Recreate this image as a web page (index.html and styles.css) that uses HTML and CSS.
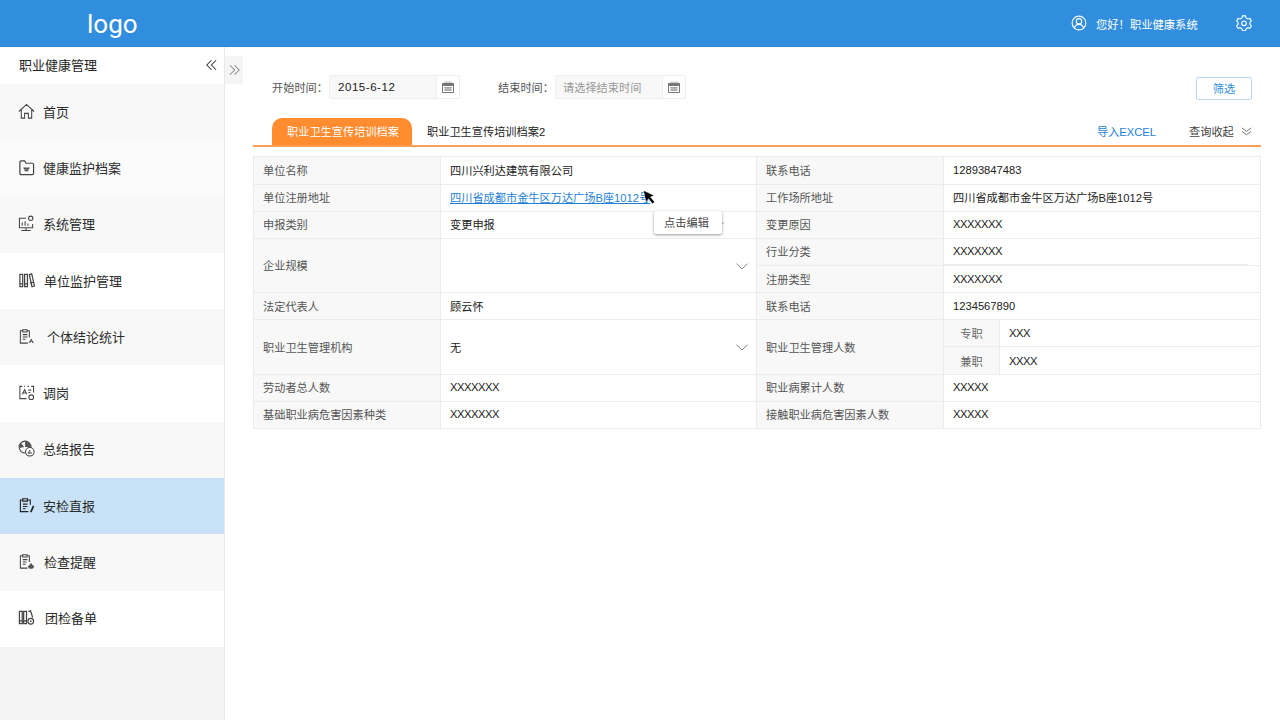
FILE: index.html
```html
<!DOCTYPE html>
<html lang="zh">
<head>
<meta charset="utf-8">
<title>职业健康管理</title>
<link rel="stylesheet" href="styles.css">
</head>
<body>
<header class="topbar">
  <div class="logo">logo</div>
  <div class="user">
    <svg class="user-icon" viewBox="0 0 16 16"><circle cx="8" cy="8" r="6.900"/><circle cx="8" cy="6.300" r="2.700"/><path d="M3.400 13c.8-2.400 2.600-3.600 4.600-3.600s3.800 1.200 4.600 3.600"/></svg>
    <span class="greeting">您好！职业健康系统</span>
    <svg class="gear-icon" viewBox="0 0 16 16"><path d="M6.500 1.200h3l.5 2 1.900 1.100 2-.6 1.500 2.600-1.500 1.400v1.900l1.500 1.400-1.500 2.600-2-.6-1.900 1.100-.5 2h-3l-.5-2-1.900-1.100-2 .6L.6 11l1.500-1.400V7.700L.6 6.300l1.500-2.600 2 .6L6 3.200z" transform="translate(0 -.3)"/><circle cx="8" cy="8.300" r="2.300"/></svg>
  </div>
</header>
<div class="layout">
  <aside class="sidebar">
    <div class="side-title">
      <span>职业健康管理</span>
      <svg class="dbl" viewBox="0 0 12 12"><path d="M6 .8.900 6 6 11.200M11 .8 5.900 6 11 11.200"/></svg>
    </div>
    <nav class="menu">
      <a class="item tint">
        <svg class="ic" viewBox="0 0 18 18"><path d="M1 9 9 1.500 17 9M3.500 7.500V16H7v-5h4v5h3.500V7.500"/></svg>
        <span>首页</span>
      </a>
      <a class="item soft">
        <svg class="ic strong" viewBox="0 0 18 18"><path d="M2 3.500C2 2.500 2.500 2 3.500 2H7l1.500 2.500h6.500c1 0 1.500.5 1.500 1.500v9c0 1-.5 1.500-1.500 1.500h-11.500C2.500 16.500 2 16 2 15z"/><path class="fill" d="M5.500 9h7l-1 2h-5zM7 11.500h4v1.500H7z"/></svg>
        <span>健康监护档案</span>
      </a>
      <a class="item tint">
        <svg class="ic" viewBox="0 0 18 18"><path d="M8.500 3.500H1.500v10h14V9.500M8.500 13.500v2.500M3.500 16.500h10M4.500 11.500V8M7.500 11.500V6.500M10.500 11.500V9"/><circle cx="13.500" cy="3.500" r="2.300"/></svg>
        <span>系统管理</span>
      </a>
      <a class="item plus1">
        <svg class="ic strong" viewBox="0 0 18 18"><path d="M2 2.500h3v13H2zM7 2.500h3v13H7zM12 2.800l2.500-.8 3 12.800-2.700.8z"/><path d="M2 12.500h3M7 12.500h3M12.800 11.800l3-.8"/></svg>
        <span>单位监护管理</span>
      </a>
      <a class="item tint plus4">
        <svg class="ic" viewBox="0 0 18 18"><path d="M10.500 16H2.500V3h2.500M9.500 3H12v7M5 1.800h4.500v2.500H5zM5 7h5M5 9.500h5M5 12h3"/><path class="fill" d="M14 11l2.800 5h-1.500L14 14l-1.300 2h-1.500z"/></svg>
        <span>个体结论统计</span>
      </a>
      <a class="item">
        <svg class="ic" viewBox="0 0 18 18"><path d="M4.500 2.500H2v13h7M14 2.500h2.500V9M6.500 2.500h1M10 2.500h1.500M4.500 11 7 6l2.500 5M5.500 9.500h3M11 6.500h3M11 9h2"/><circle cx="14" cy="14" r="2.500"/></svg>
        <span>调岗</span>
      </a>
      <a class="item tint">
        <svg class="ic" viewBox="0 0 18 18"><circle cx="7.500" cy="7.500" r="6.300"/><path class="fill" d="M7.500 1.500v6h6c0-3.500-2.500-6-6-6zM3 3l3.500 4.500-5 1C1.300 6 2 4 3 3z"/><circle class="white" cx="12.500" cy="12.500" r="4.500"/><path d="M11 14.500v-2M12.500 14.500v-4M14 14.500v-1.500"/></svg>
        <span>总结报告</span>
      </a>
      <a class="item active">
        <svg class="ic dark" viewBox="0 0 18 18"><path d="M11 15.500H2.500V3.200H5M10 3.200h3v5M5 1.800h5v2.500H5zM5.200 7.500H10M5.200 10H10M5.200 12.500H8"/><path class="wide" d="M16.500 9.500 13.500 16"/></svg>
        <span>安检直报</span>
      </a>
      <a class="item tint plus1">
        <svg class="ic" viewBox="0 0 18 18"><path d="M10 16H2.500V3H5M9.500 3H12v6.500M5 1.800h4.500v2.500H5zM5 7h5M5 9.500h4M5 12h3"/><path class="fill" d="M13.800 10.500l3 3.500c.3 2-1.300 2.800-3 2.800s-3.300-.8-3-2.800z"/></svg>
        <span>检查提醒</span>
      </a>
      <a class="item plus2">
        <svg class="ic strong" viewBox="0 0 18 18"><path d="M1.500 2.500h3v13h-3zM6 2.500h3v13H6zM11 2.800l2.300-.8 2.200 7"/><path d="M1.500 12.500h3M6 12.500h3"/><circle cx="13.500" cy="13" r="3"/><circle class="fill" cx="13.500" cy="13" r="1"/></svg>
        <span>团检备单</span>
      </a>
    </nav>
  </aside>
  <button class="toggle" type="button" aria-label="展开">
    <svg class="dbl grey" viewBox="0 0 12 12"><path d="M1 .8 6.100 6 1 11.200M6 .8 11.100 6 6 11.200"/></svg>
  </button>
  <main class="main">
    <form class="filters">
      <label class="filter-label">开始时间：</label>
      <div class="date">
        <span class="date-value">2015-6-12</span>
        <span class="date-btn"><svg class="cal" viewBox="0 0 12 12"><path d="M.5 2.500h11v9H.5z"/><path class="thin" d="M3 .5v2M5 .5v2M7 .5v2M9 .5v2"/><path class="fill" d="M.5 2.500h11v2.500H.5z"/><path class="thin" d="M2 6.800h8M2 9h8M4 6v4M6 6v4M8 6v4"/></svg></span>
      </div>
      <label class="filter-label second">结束时间：</label>
      <div class="date">
        <span class="date-value placeholder">请选择结束时间</span>
        <span class="date-btn"><svg class="cal" viewBox="0 0 12 12"><path d="M.5 2.500h11v9H.5z"/><path class="thin" d="M3 .5v2M5 .5v2M7 .5v2M9 .5v2"/><path class="fill" d="M.5 2.500h11v2.500H.5z"/><path class="thin" d="M2 6.800h8M2 9h8M4 6v4M6 6v4M8 6v4"/></svg></span>
      </div>
      <button class="screen" type="button">筛选</button>
    </form>
    <div class="tabs">
      <span class="tab on">职业卫生宣传培训档案</span>
      <span class="tab">职业卫生宣传培训档案2</span>
      <a class="import">导入EXCEL</a>
      <span class="collapse">查询收起
        <svg class="dbl-down" viewBox="0 0 12 10"><path d="M.8 1 6 4.800 11.200 1M.8 4.800 6 8.600l5.200-3.800"/></svg>
      </span>
    </div>
    <div class="sheet">
      <table class="record">
        <colgroup><col class="c-label"><col class="c-value"><col class="c-label"><col></colgroup>
        <tr class="tall">
          <th>单位名称</th><td>四川兴利达建筑有限公司</td>
          <th>联系电话</th><td>12893847483</td>
        </tr>
        <tr class="row">
          <th>单位注册地址</th><td><a class="link">四川省成都市金牛区万达广场B座1012号</a></td>
          <th>工作场所地址</th><td>四川省成都市金牛区万达广场B座1012号</td>
        </tr>
        <tr class="row">
          <th>申报类别</th><td class="select">变更申报<svg class="chev under-tip" viewBox="0 0 12 7"><path d="M.5.700 6 6l5.500-5.300"/></svg></td>
          <th>变更原因</th><td class="xs">XXXXXXX</td>
        </tr>
        <tr class="row">
          <th rowspan="2">企业规模</th>
          <td rowspan="2" class="select"><svg class="chev" viewBox="0 0 12 7"><path d="M.5.700 6 6l5.500-5.300"/></svg></td>
          <th>行业分类</th><td class="lined xs"><div class="lined-in">XXXXXXX</div></td>
        </tr>
        <tr class="row low">
          <th>注册类型</th><td class="xs">XXXXXXX</td>
        </tr>
        <tr class="row low">
          <th>法定代表人</th><td>顾云怀</td>
          <th>联系电话</th><td>1234567890</td>
        </tr>
        <tr class="row low">
          <th rowspan="2">职业卫生管理机构</th>
          <td rowspan="2" class="select">无<svg class="chev" viewBox="0 0 12 7"><path d="M.5.700 6 6l5.500-5.300"/></svg></td>
          <th rowspan="2">职业卫生管理人数</th>
          <td rowspan="2" class="nest">
            <div class="split">
              <span class="split-label">专职</span><span class="split-value xs">XXX</span>
              <span class="split-label last">兼职</span><span class="split-value last xs">XXXX</span>
            </div>
          </td>
        </tr>
        <tr class="tall"></tr>
        <tr class="row">
          <th>劳动者总人数</th><td class="xs">XXXXXXX</td>
          <th>职业病累计人数</th><td class="xs">XXXXX</td>
        </tr>
        <tr class="row">
          <th>基础职业病危害因素种类</th><td class="xs">XXXXXXX</td>
          <th>接触职业病危害因素人数</th><td class="xs">XXXXX</td>
        </tr>
      </table>
      <div class="tip">点击编辑</div>
      <svg class="cursor" viewBox="0 0 14 15"><path d="M.5.500 11 5.500 7.500 7l4 5-2 1.800-4-5L3 12z"/></svg>
    </div>
  </main>
</div>
</body>
</html>
```
FILE: styles.css
```css
* { box-sizing: border-box; }
html, body { height: 100%; }
body {
  margin: 0;
  height: 720px;
  overflow: hidden;
  display: flex;
  flex-direction: column;
  background: #fff;
  color: #222;
  font-family: "Liberation Sans", "Noto Sans CJK SC", sans-serif;
  font-size: 11.2px;
}
.topbar {
  height: 47px;
  flex: none;
  display: flex;
  align-items: center;
  justify-content: space-between;
  background: #318ede;
  border-bottom: 1px solid #2f86d2;
  color: #fff;
}
.logo {
  margin-left: 87px;
  padding-top: 2px;
  font-family: Roboto, sans-serif;
  font-size: 26px;
  line-height: 47px;
}
.user { display: flex; align-items: center; margin-right: 28px; }
.user-icon, .gear-icon { fill: none; stroke: #fff; stroke-width: 1.100; }
.user-icon { width: 16px; height: 16px; }
.greeting { margin-left: 9px; padding-top: 2px; width: 102px; white-space: nowrap; font-size: 11.300px; }
.gear-icon { width: 16px; height: 16px; margin-left: 38px; }

.layout { flex: 1; display: flex; min-height: 0; }
.sidebar {
  width: 225px;
  flex: none;
  display: flex;
  flex-direction: column;
  background: #f3f3f3;
  border-right: 1px solid #e8e8e8;
}
.side-title {
  height: 37px;
  flex: none;
  display: flex;
  align-items: center;
  justify-content: space-between;
  padding: 0 7px 2px 19px;
  background: #fff;
  font-size: 13px;
  color: #222;
}
.dbl { width: 11px; height: 12px; fill: none; stroke: #333; stroke-width: 1.100; }
.dbl.grey { stroke: #888; }
.item {
  height: 56.300px;
  display: flex;
  align-items: center;
  gap: 8px;
  padding: 0 0 2px 18px;
  background: #fff;
  font-size: 13px;
  color: #2a2a2a;
}
.item.tint { background: #f8f8f8; }
.item.soft { background: #fbfbfb; }
.item.active { background: #c9e2f7; }
.item.plus1 span { margin-left: 1px; }
.item.plus2 span { margin-left: 2px; }
.item.plus4 span { margin-left: 4px; }
.ic { width: 17px; height: 17px; flex: none; fill: none; stroke: #444; stroke-width: 1.100; }
.ic.strong { stroke: #444; stroke-width: 1.300; }
.ic.dark { stroke: #222; stroke-width: 1.200; }
.ic .wide { stroke-width: 1.800; }
.ic .fill { fill: #555; stroke: none; }
.ic .white { fill: #fff; }

.toggle {
  width: 18px;
  height: 28px;
  flex: none;
  margin-top: 9px;
  padding: 0;
  display: flex;
  align-items: center;
  justify-content: center;
  border: 0;
  background: #f5f5f5;
}
.main { flex: 1; min-width: 0; padding: 28px 19px 0 10px; }
.filters { display: flex; align-items: center; height: 24px; padding-left: 19px; }
.filter-label { width: 57px; color: #555; white-space: nowrap; }
.filter-label.second { margin-left: 38px; }
.date {
  width: 131px;
  height: 24px;
  display: flex;
  border: 1px solid #eee;
  border-radius: 2px;
}
.date-value {
  flex: 1;
  display: flex;
  align-items: center;
  padding-left: 8px;
  background: #f8f8f8;
  font-size: 11.500px;
  letter-spacing: .55px;
  color: #222;
}
.date-value.placeholder { color: #999; font-size: 11.200px; letter-spacing: 0; padding-left: 7px; }
.date-btn { width: 23px; display: flex; align-items: center; justify-content: center; border-left: 1px solid #eee; }
.cal { width: 12px; height: 12px; fill: none; stroke: #777; stroke-width: 1; }
.cal .thin { stroke-width: .7; }
.cal .fill { fill: #777; stroke: none; }
.screen {
  width: 56px;
  height: 23px;
  margin-left: auto;
  margin-right: 9px;
  margin-top: 2px;
  padding: 0;
  border: 1px solid #b7d7f4;
  border-radius: 2px;
  background: #fff;
  color: #318ede;
  font: inherit;
}
.tabs {
  height: 29px;
  margin-top: 19px;
  padding-left: 19px;
  display: flex;
  align-items: flex-end;
  border-bottom: 2px solid #fc9d55;
}
.tab { height: 27px; line-height: 28px; padding: 0 15px; color: #222; white-space: nowrap; }
.tab.on {
  width: 140px;
  background: #ff8c2e;
  border-radius: 10px 10px 0 0;
  color: #fff;
}
.import { margin-left: auto; height: 27px; line-height: 28px; color: #1f7fd6; }
.collapse {
  width: 63px;
  margin-left: 33px;
  margin-right: 9px;
  height: 27px;
  line-height: 28px;
  color: #444;
  display: flex;
  justify-content: space-between;
  align-items: center;
  white-space: nowrap;
}
.dbl-down { width: 11px; height: 9px; fill: none; stroke: #555; stroke-width: .9; }

.sheet { position: relative; margin-top: 9px; }
.record {
  width: 1008px;
  table-layout: fixed;
  border-collapse: collapse;
  border: 1px solid #ececec;
}
.c-label { width: 187px; }
.c-value { width: 316px; }
.tall { height: 28px; }
.row { height: 27px; }
.record th, .record td { padding: 0 9px 2px; border: 1px solid #ececec; font-weight: 400; text-align: left; white-space: nowrap; }
.record .low th, .record .low td { padding-bottom: 0; }
.record th { background: #f8f8f8; color: #555; }
.record td { color: #222; }
.xs { letter-spacing: -.45px; }
.link { color: #1f7fd6; text-decoration: underline; }
.select { position: relative; }
.chev { position: absolute; right: 8px; top: 50%; margin-top: -3px; width: 12px; height: 7px; fill: none; stroke: #777; stroke-width: .9; }
.chev.under-tip { right: 32px; }
.record td.lined { padding: 0; border-bottom: 0; }
.lined-in { height: 26px; line-height: 25px; padding-left: 9px; margin-right: 12px; border-bottom: 1px solid #ececec; }
.record .low td.nest, .record td.nest { padding: 0; }
.split { display: grid; grid-template-columns: 56px 1fr; grid-template-rows: 27px 27px; }
.split-label {
  display: flex;
  align-items: center;
  justify-content: center;
  background: #f8f8f8;
  color: #666;
  border-right: 1px solid #ececec;
  border-bottom: 1px solid #ececec;
  letter-spacing: 0;
}
.split-value { display: flex; align-items: center; padding-left: 9px; border-bottom: 1px solid #ececec; }
.split-label.last, .split-value.last { border-bottom: 0; }
.tip {
  position: absolute;
  left: 401px;
  top: 55px;
  width: 68px;
  height: 23px;
  padding: 0 3px 1px 0;
  display: flex;
  align-items: center;
  justify-content: center;
  background: #fff;
  border-radius: 2px;
  box-shadow: 0 1px 3px rgba(0,0,0,.4);
  color: #444;
}
.cursor { position: absolute; left: 390px; top: 34px; width: 14px; height: 15px; fill: #000; stroke: #fff; stroke-width: .4; }
```
